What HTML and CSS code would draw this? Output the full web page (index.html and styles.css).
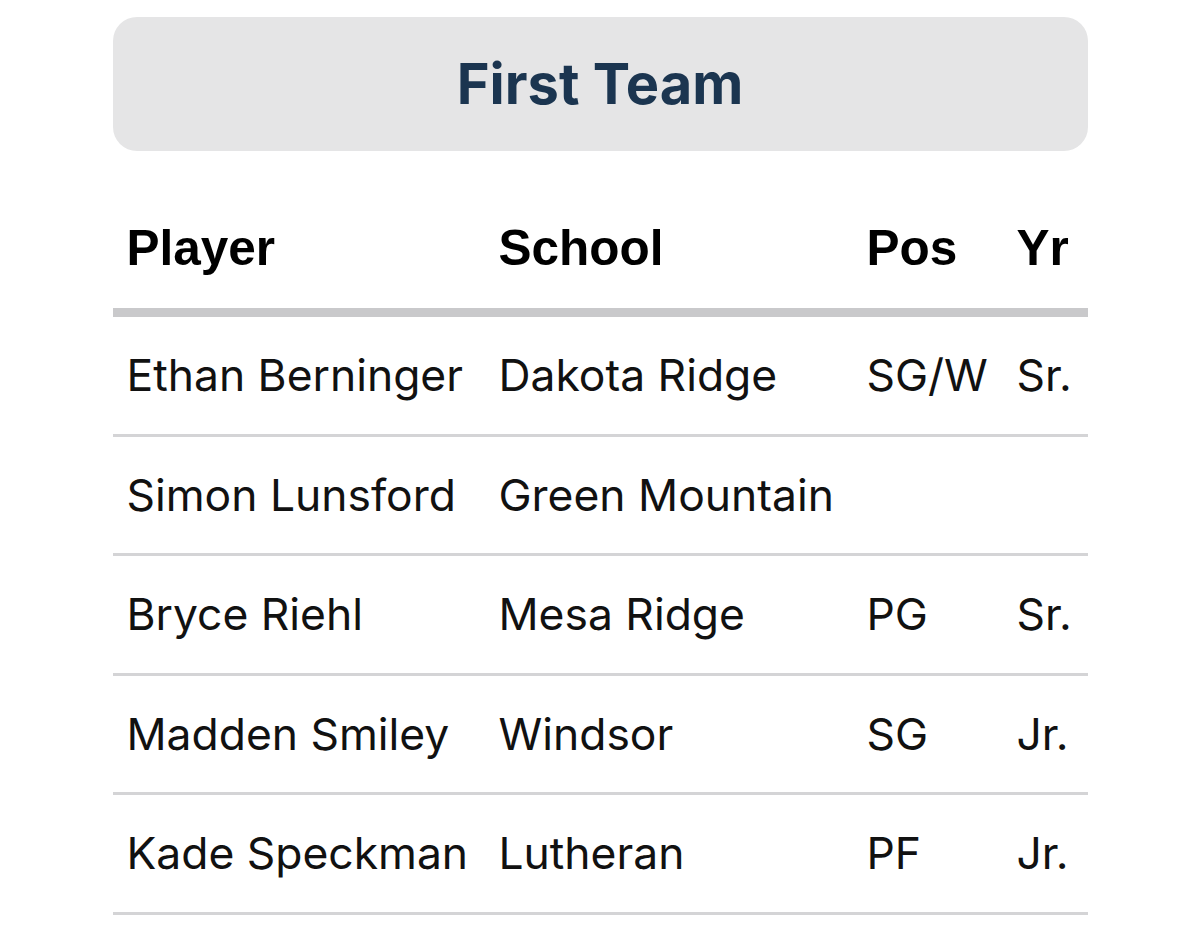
FILE: index.html
```html
<!DOCTYPE html>
<html>
<head>
<meta charset="utf-8">
<link rel="stylesheet" href="styles.css">
</head>
<body>
<div class="wrap">
  <div class="banner"><h2>First Team</h2></div>
  <table class="roster">
    <thead>
      <tr><th class="c-player">Player</th><th class="c-school">School</th><th class="c-pos">Pos</th><th class="c-yr">Yr</th></tr>
    </thead>
    <tbody>
      <tr><td>Ethan Berninger</td><td>Dakota Ridge</td><td>SG/W</td><td>Sr.</td></tr>
      <tr><td>Simon Lunsford</td><td>Green Mountain</td><td></td><td></td></tr>
      <tr><td>Bryce Riehl</td><td>Mesa Ridge</td><td>PG</td><td>Sr.</td></tr>
      <tr><td>Madden Smiley</td><td>Windsor</td><td>SG</td><td>Jr.</td></tr>
      <tr><td>Kade Speckman</td><td>Lutheran</td><td>PF</td><td>Jr.</td></tr>
    </tbody>
  </table>
</div>
</body>
</html>
```

FILE: styles.css
```css
html, body {
  margin: 0;
  padding: 0;
  background: #ffffff;
}
body {
  font-family: Inter, "Noto Sans", sans-serif;
  color: #111111;
}
.wrap {
  width: 975px;
  margin: 0 auto;
  padding-top: 17px;
}
.banner {
  background: #e5e5e6;
  border-radius: 24px;
  height: 134px;
  display: flex;
  align-items: center;
  justify-content: center;
}
.banner h2 {
  margin: 0;
  font-size: 56px;
  font-weight: 700;
  color: #1b3550;
}
.roster {
  width: 975px;
  border-collapse: collapse;
  table-layout: fixed;
}
.roster th, .roster td {
  text-align: left;
  padding: 0 0 0 14px;
  white-space: nowrap;
  overflow: visible;
}
.roster th {
  font-family: "Liberation Sans", Arial, sans-serif;
  font-weight: 700;
  font-size: 49.5px;
  height: 121px;
  padding-top: 36px;
  border-bottom: 9px solid #c9c9cb;
  color: #000;
}
.roster td {
  font-size: 44.4px;
  height: 116.5px;
  border-bottom: 3px solid #d4d4d6;
  color: #111;
}
.c-player { width: 358px; }
.c-school { width: 354px; }
.c-pos { width: 136px; }
.c-yr { width: 71px; }
```
